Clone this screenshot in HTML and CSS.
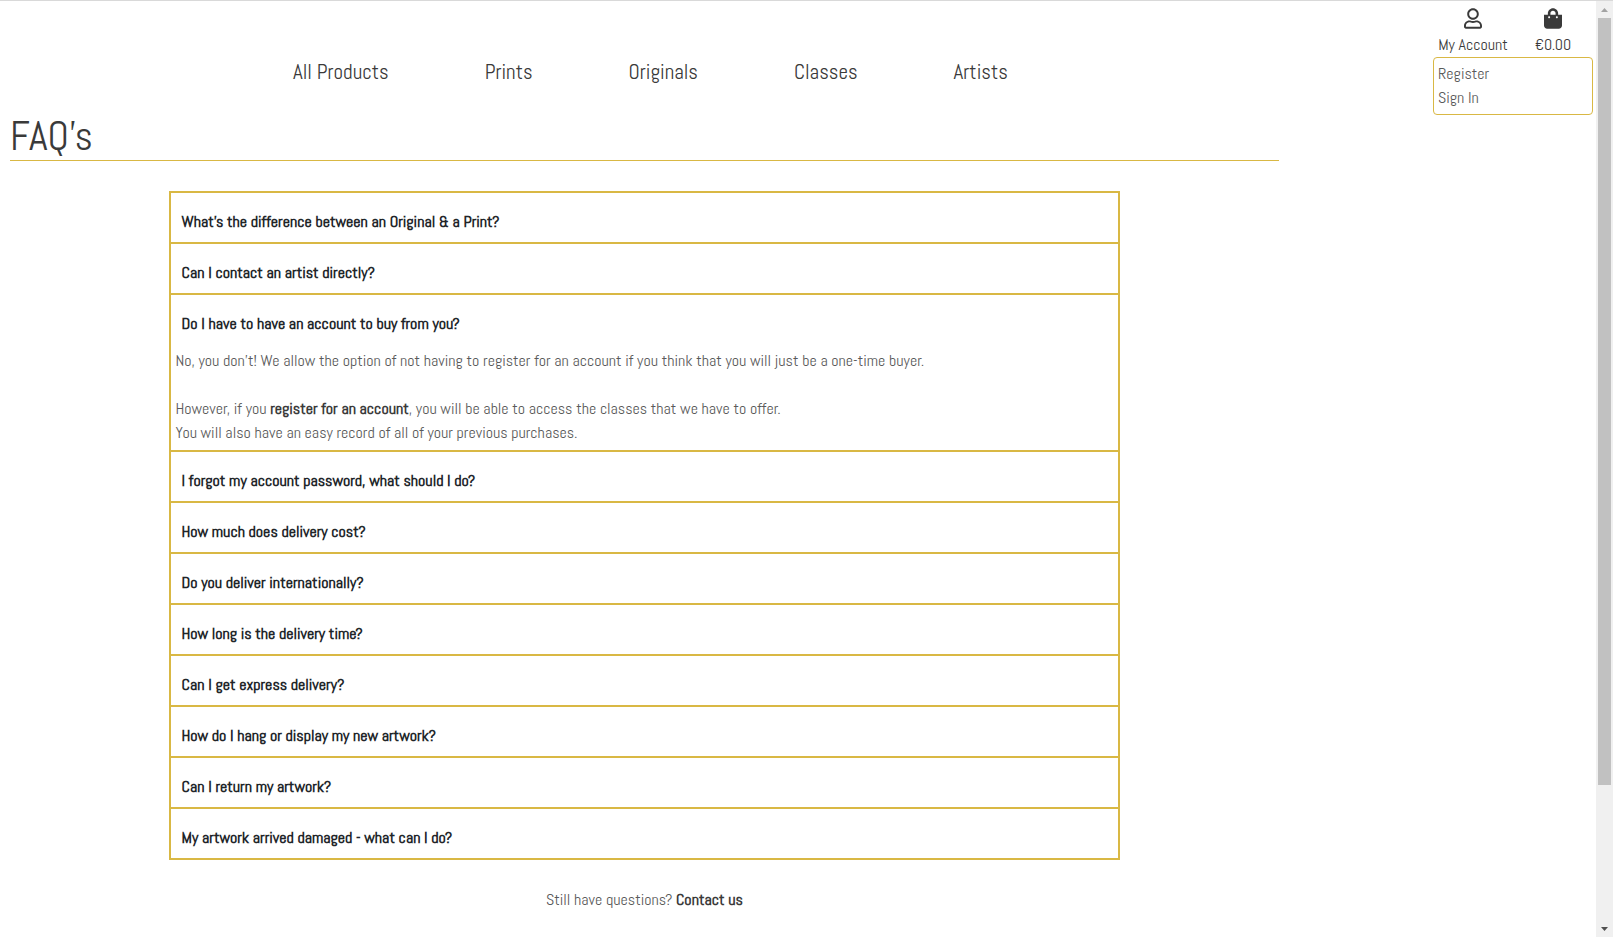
FILE: index.html
```html
<!DOCTYPE html>
<html lang="en">
<head>
<meta charset="utf-8">
<title>FAQ's</title>
<link rel="stylesheet" href="styles.css">
</head>
<body>
<div class="viewport">
  <div class="page">
    <div class="primary">
      <nav class="nav" aria-label="Main">
        <a href="#">All Products</a>
        <a href="#">Prints</a>
        <a href="#">Originals</a>
        <a href="#">Classes</a>
        <a href="#">Artists</a>
      </nav>
      <main>
        <h1 class="title">FAQ's</h1>
        <div class="faq">
          <section class="item"><button class="question" type="button">What's the difference between an Original &amp; a Print?</button></section>
          <section class="item"><button class="question" type="button">Can I contact an artist directly?</button></section>
          <section class="item">
            <button class="question" type="button" aria-expanded="true">Do I have to have an account to buy from you?</button>
            <p class="answer">No, you don't! We allow the option of not having to register for an account if you think that you will just be a one-time buyer.<br><br>However, if you <a href="#">register for an account</a>, you will be able to access the classes that we have to offer.<br>You will also have an easy record of all of your previous purchases.</p>
          </section>
          <section class="item"><button class="question" type="button">I forgot my account password, what should I do?</button></section>
          <section class="item"><button class="question" type="button">How much does delivery cost?</button></section>
          <section class="item"><button class="question" type="button">Do you deliver internationally?</button></section>
          <section class="item"><button class="question" type="button">How long is the delivery time?</button></section>
          <section class="item"><button class="question" type="button">Can I get express delivery?</button></section>
          <section class="item"><button class="question" type="button">How do I hang or display my new artwork?</button></section>
          <section class="item"><button class="question" type="button">Can I return my artwork?</button></section>
          <section class="item"><button class="question" type="button">My artwork arrived damaged - what can I do?</button></section>
        </div>
        <p class="contact">Still have questions? <a href="#">Contact us</a></p>
      </main>
    </div>
    <aside class="account">
      <div class="shortcuts">
        <a class="shortcut" href="#">
          <svg width="18" height="21" viewBox="0 0 448 512" aria-hidden="true"><path fill="currentColor" d="M313.600 304c-28.700 0-42.500 16-89.600 16s-60.800-16-89.600-16C60.200 304 0 364.200 0 438.400V464c0 26.500 21.500 48 48 48h352c26.500 0 48-21.500 48-48v-25.600c0-74.200-60.200-134.400-134.400-134.400zM400 464H48v-25.600c0-47.600 38.800-86.400 86.400-86.400 14.600 0 38.300 16 89.600 16 51.700 0 74.900-16 89.600-16 47.600 0 86.400 38.800 86.400 86.400V464zM224 288c79.500 0 144-64.500 144-144S303.500 0 224 0 80 64.500 80 144s64.500 144 144 144zm0-240c52.900 0 96 43.100 96 96s-43.100 96-96 96-96-43.100-96-96 43.100-96 96-96z"/></svg>
          <span>My Account</span>
        </a>
        <a class="shortcut" href="#">
          <svg width="18" height="21" viewBox="0 0 448 512" aria-hidden="true"><path fill="currentColor" d="M352 160v-32C352 57.400 294.600 0 224 0S96 57.400 96 128v32H0v272c0 44.200 35.800 80 80 80h288c44.200 0 80-35.800 80-80V160h-96zm-192-32c0-35.300 28.700-64 64-64s64 28.700 64 64v32H160v-32zm160 120c-13.300 0-24-10.700-24-24s10.700-24 24-24 24 10.700 24 24-10.700 24-24 24zm-192 0c-13.300 0-24-10.700-24-24s10.700-24 24-24 24 10.700 24 24-10.700 24-24 24z"/></svg>
          <span>€0.00</span>
        </a>
      </div>
      <div class="menu">
        <a href="#">Register</a>
        <a href="#">Sign In</a>
      </div>
    </aside>
  </div>
  <div class="scrollbar" aria-hidden="true">
    <svg class="arrow" width="17" height="17" viewBox="0 0 17 17"><path fill="#a3a3a3" d="M5 11h7L8.500 7z"/></svg>
    <div class="track"><div class="thumb"></div></div>
    <svg class="arrow" width="17" height="17" viewBox="0 0 17 17"><path fill="#505050" d="M5 7h7L8.500 11z"/></svg>
  </div>
</div>
</body>
</html>
```
FILE: styles.css
```css
* { box-sizing: border-box; }

body {
  margin: 0;
  background: #fff;
  color: #3a3a3a;
  font: 16px/24px Abel, "Liberation Sans Narrow", "Roboto Condensed", "Liberation Sans", sans-serif;
}

a { color: inherit; text-decoration: none; }

.viewport {
  display: flex;
  min-height: 100vh;
  border-top: 1px solid #d9d9d9;
}

.page {
  display: flex;
  flex: 1;
  justify-content: space-between;
  align-items: flex-start;
  padding-left: 10px;
}

.primary { width: 80%; }

.nav {
  display: flex;
  justify-content: center;
  gap: 96px;
  padding: 56px 0 28px 12px;
  font-size: 21px;
  line-height: 30px;
}

.title {
  margin: 0;
  padding-bottom: 2px;
  border-bottom: 1px solid #d9b844;
  color: #3a3a3a;
  font-size: 40px;
  font-weight: 400;
  line-height: 43px;
}

.faq {
  width: 75%;
  margin: 30px auto 28px;
  border-bottom: 2px solid #d9b844;
}

.item {
  border: 2px solid #d9b844;
  border-bottom: 0;
}

.question {
  display: block;
  width: 100%;
  padding: 17px 11px 8px;
  border: 0;
  background: none;
  color: #212529;
  font: inherit;
  font-weight: 700;
  text-align: left;
}

.answer {
  margin: 0;
  padding: 5px;
  color: #5a5a5a;
}

.answer a, .contact a { color: #3a3a3a; font-weight: 700; }

.contact {
  margin: 0;
  color: #5a5a5a;
  text-align: center;
}

.account {
  width: 160px;
  margin-right: 3px;
}

.shortcuts {
  display: flex;
  height: 56px;
  padding-top: 7px;
}

.shortcut {
  display: flex;
  flex: 1;
  flex-direction: column;
  align-items: center;
  gap: 4px;
}

.menu {
  display: flex;
  flex-direction: column;
  padding: 4px;
  border: 1px solid #d9b844;
  border-radius: 4px;
  color: #5a5a5a;
}

.scrollbar {
  display: flex;
  flex-direction: column;
  width: 17px;
  background: #f0f0f0;
}

.track { flex: 1; padding: 0 2px; }

.thumb { height: 85%; background: #c1c1c1; }
```
